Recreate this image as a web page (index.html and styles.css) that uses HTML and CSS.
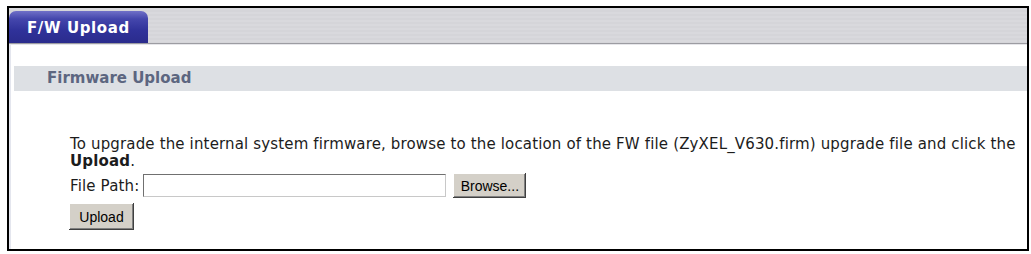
FILE: index.html
```html
<!DOCTYPE html>
<html lang="en">
  <head>
    <meta charset="UTF-8" />
    <title>F/W Upload</title>
    <link rel="stylesheet" href="styles.css">
  </head>
  <body>
    <div class="frame">
      <div class="tab-bar">
        <div class="tab">F/W Upload</div>
      </div>
      <div class="section-title">Firmware Upload</div>
      <div class="content">
        <p class="intro">
          To upgrade the internal system firmware, browse to the location of the FW file (ZyXEL_V630.firm) upgrade file and click the <b>Upload</b>.
        </p>
        <div class="file-row">
          <span class="label">File Path:</span>
          <input type="text" class="path" />
          <button class="btn browse">Browse...</button>
        </div>
        <button class="btn upload">Upload</button>
      </div>
    </div>
  </body>
</html>
```

FILE: styles.css
```css
body {
  margin: 0;
  padding: 6px 0 0 7px;
  background: #fff;
  font-family: "DejaVu Sans", Verdana, sans-serif;
}

.frame {
  width: 1018px;
  height: 241px;
  border: 2px solid #000;
  background: #fff;
  box-shadow: inset 2px 0 0 #e4e6ee;
}

.tab-bar {
  height: 35px;
  display: flex;
  align-items: flex-end;
  background: repeating-linear-gradient(
    to bottom,
    #d9d9dd 0px,
    #d9d9dd 2px,
    #d5d5d9 2px,
    #d5d5d9 4px
  );
  border-bottom: 1px solid #9c9ca2;
  box-shadow: 0 1px 0 #e6e6ea;
}

.tab {
  width: 139px;
  height: 32px;
  box-sizing: border-box;
  padding: 10px 0 0 18px;
  border-radius: 7px 7px 0 0;
  background: linear-gradient(to bottom, #7070c8 0%, #4446ac 25%, #30329a 60%, #2a2b8c 100%);
  color: #fff;
  font-weight: bold;
  font-size: 15px;
  line-height: 15px;
  letter-spacing: 0.6px;
}

.section-title {
  margin: 22px 0 0 5px;
  height: 25px;
  line-height: 25px;
  padding-left: 33px;
  background: #dde0e4;
  color: #5c6680;
  font-weight: bold;
  font-size: 15px;
}

.content {
  padding: 45px 0 0 61px;
  color: #1c1c1c;
  font-size: 15px;
  letter-spacing: 0.15px;
}

.intro {
  margin: 0;
  line-height: 17px;
}

.file-row {
  display: flex;
  align-items: center;
  margin-top: 3px;
  height: 25px;
}

.label {
  margin-right: 4px;
}

.path {
  width: 303px;
  height: 23px;
  box-sizing: border-box;
  margin: 0;
  border: 1px solid #c8c8c8;
  border-top-color: #707070;
  border-left-color: #707070;
}

.btn {
  box-sizing: border-box;
  margin: 0;
  padding: 0;
  background: #d4d0c8;
  border: none;
  box-shadow: inset -1px -1px #404040, inset 1px 1px #fff, inset -2px -2px #808080;
  font-family: "Liberation Sans", Arial, sans-serif;
  font-size: 14px;
  letter-spacing: 0;
  color: #000;
}

.browse {
  width: 73px;
  height: 25px;
  margin-left: 7px;
}

.upload {
  display: block;
  width: 65px;
  height: 27px;
  margin: 5px 0 0 -1px;
}
```
